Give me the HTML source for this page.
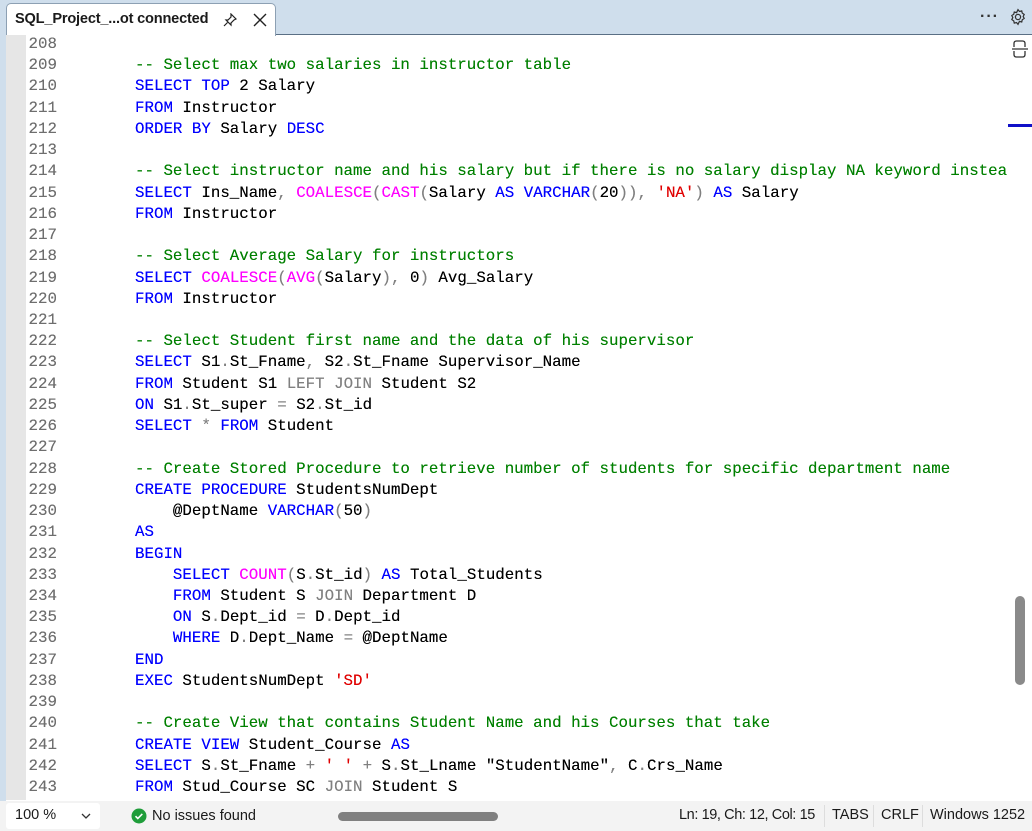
<!DOCTYPE html>
<html><head><meta charset="utf-8"><style>
body{margin:0;width:1032px;height:831px;overflow:hidden;background:#fff;font-family:"Liberation Sans",sans-serif;position:relative}
.tabbar{position:absolute;left:0;top:0;width:1032px;height:34px;background:#cfdeec;border-bottom:1px solid #5a6f85}
.tab{position:absolute;left:6px;top:3px;width:268px;height:32px;background:#fff;border:1px solid #8da0b3;border-bottom:none;border-radius:5px 5px 0 0}
.tab .t{position:absolute;left:8px;top:7px;font-size:14.6px;font-weight:bold;color:#1a1a1a;letter-spacing:-0.2px}
.lb{position:absolute;left:0;top:34px;width:6px;height:797px;background:#cfdeec}
.gut{position:absolute;left:6px;top:35px;width:20px;height:765px;background:#e6e6e6}
.code{position:absolute;left:0;top:34px;font-family:"Liberation Mono",monospace;font-size:15.8px;line-height:21.23px;white-space:pre;color:#000;text-shadow:0 0 0.3px currentColor}
.ln{position:absolute;left:27px;width:30px;text-align:right;color:#6e6e6e}
.c{position:absolute;left:135px}
.k{color:#0000ff}.f{color:#ff00ff}.g{color:#008000}.s{color:#e00000}.p{color:#808080}
.status{position:absolute;left:0;top:801px;width:1032px;height:30px;background:#f3f3f3;font-size:14.5px;color:#1a1a1a}
</style></head><body>
<div class="tabbar"><div class="tab"><span class="t">SQL_Project_...ot connected</span>
<svg style="position:absolute;left:216px;top:9px" width="14" height="14" viewBox="0 0 14 14" fill="none" stroke="#222" stroke-width="1.2"><path d="M8 1l5 5-2 1-3 3v2L3 7h2l3-3z M4.5 9.5L1 13"/></svg>
<svg style="position:absolute;left:246px;top:9px" width="14" height="14" viewBox="0 0 14 14" stroke="#222" stroke-width="1.4"><path d="M1 1L13 13M13 1L1 13"/></svg>
</div>
<div style="position:absolute;left:980px;top:8px;font-size:16px;font-weight:bold;color:#333;letter-spacing:1px">···</div>
<svg style="position:absolute;left:1009px;top:8px" width="18" height="18" viewBox="0 0 16 16" fill="none" stroke="#333" stroke-width="1.1"><circle cx="8" cy="8" r="2.3"/><path d="M8 1.5l1.3 1.6 2-.5.5 2 1.7 1.1-.9 1.8.9 1.8-1.7 1.1-.5 2-2-.5L8 14.5l-1.3-1.6-2 .5-.5-2-1.7-1.1.9-1.8-.9-1.8 1.7-1.1.5-2 2 .5z"/></svg>
</div>
<div class="lb"></div><div class="gut"></div>
<svg style="position:absolute;left:1010px;top:39px" width="20" height="20" viewBox="0 0 20 20" fill="none" stroke="#333" stroke-width="1.3"><path d="M4 8V4.5Q4 2 6.5 2h6Q15 2 15 4.5V8M4 12v3.5Q4 18 6.5 18h6q2.5 0 2.5-2.5V12M2 10h16"/></svg>
<div style="position:absolute;left:1008px;top:124px;width:24px;height:3px;background:#1010c8"></div>
<div style="position:absolute;left:1015px;top:596px;width:10px;height:89px;background:#8a8a8a;border-radius:5px"></div>
<div class="code" id="code"></div>
<div class="status">
<div style="position:absolute;left:6px;top:2px;width:94px;height:26px;background:#fff;border-radius:3px"></div>
<span style="position:absolute;left:15px;top:6px">100 %</span>
<svg style="position:absolute;left:80px;top:11px" width="12" height="8" viewBox="0 0 12 8" fill="none" stroke="#333" stroke-width="1.3"><path d="M2 2l4 4 4-4"/></svg>
<svg style="position:absolute;left:131px;top:7px" width="16" height="16" viewBox="0 0 16 16"><circle cx="8" cy="8" r="7.5" fill="#1f9d3a"/><path d="M4.5 8.2l2.3 2.3 4.5-4.6" stroke="#fff" stroke-width="1.6" fill="none"/></svg>
<span style="position:absolute;left:152px;top:7px">No issues found</span>
<div style="position:absolute;left:338px;top:11px;width:160px;height:9px;background:#808080;border-radius:5px"></div>
<span style="position:absolute;left:679px;top:6px;letter-spacing:-0.4px">Ln: 19, Ch: 12, Col: 15</span>
<div style="position:absolute;left:824px;top:4px;width:1px;height:22px;background:#ddd"></div>
<span style="position:absolute;left:832px;top:6px">TABS</span>
<div style="position:absolute;left:873px;top:4px;width:1px;height:22px;background:#ddd"></div>
<span style="position:absolute;left:881px;top:6px">CRLF</span>
<div style="position:absolute;left:922px;top:4px;width:1px;height:22px;background:#ddd"></div>
<span style="position:absolute;left:930px;top:6px">Windows 1252</span>
</div>
<script>
var L=[
'',
'<span class="g">-- Select max two salaries in instructor table</span>',
'<span class="k">SELECT TOP</span> 2 Salary',
'<span class="k">FROM</span> Instructor',
'<span class="k">ORDER BY</span> Salary <span class="k">DESC</span>',
'',
'<span class="g">-- Select instructor name and his salary but if there is no salary display NA keyword instea</span>',
'<span class="k">SELECT</span> Ins_Name<span class="p">,</span> <span class="f">COALESCE</span><span class="p">(</span><span class="f">CAST</span><span class="p">(</span>Salary <span class="k">AS VARCHAR</span><span class="p">(</span>20<span class="p">)),</span> <span class="s">\'NA\'</span><span class="p">)</span> <span class="k">AS</span> Salary',
'<span class="k">FROM</span> Instructor',
'',
'<span class="g">-- Select Average Salary for instructors</span>',
'<span class="k">SELECT</span> <span class="f">COALESCE</span><span class="p">(</span><span class="f">AVG</span><span class="p">(</span>Salary<span class="p">),</span> 0<span class="p">)</span> Avg_Salary',
'<span class="k">FROM</span> Instructor',
'',
'<span class="g">-- Select Student first name and the data of his supervisor</span>',
'<span class="k">SELECT</span> S1<span class="p">.</span>St_Fname<span class="p">,</span> S2<span class="p">.</span>St_Fname Supervisor_Name',
'<span class="k">FROM</span> Student S1 <span class="p">LEFT JOIN</span> Student S2',
'<span class="k">ON</span> S1<span class="p">.</span>St_super <span class="p">=</span> S2<span class="p">.</span>St_id',
'<span class="k">SELECT</span> <span class="p">*</span> <span class="k">FROM</span> Student',
'',
'<span class="g">-- Create Stored Procedure to retrieve number of students for specific department name</span>',
'<span class="k">CREATE PROCEDURE</span> StudentsNumDept',
'    @DeptName <span class="k">VARCHAR</span><span class="p">(</span>50<span class="p">)</span>',
'<span class="k">AS</span>',
'<span class="k">BEGIN</span>',
'    <span class="k">SELECT</span> <span class="f">COUNT</span><span class="p">(</span>S<span class="p">.</span>St_id<span class="p">)</span> <span class="k">AS</span> Total_Students',
'    <span class="k">FROM</span> Student S <span class="p">JOIN</span> Department D',
'    <span class="k">ON</span> S<span class="p">.</span>Dept_id <span class="p">=</span> D<span class="p">.</span>Dept_id',
'    <span class="k">WHERE</span> D<span class="p">.</span>Dept_Name <span class="p">=</span> @DeptName',
'<span class="k">END</span>',
'<span class="k">EXEC</span> StudentsNumDept <span class="s">\'SD\'</span>',
'',
'<span class="g">-- Create View that contains Student Name and his Courses that take</span>',
'<span class="k">CREATE VIEW</span> Student_Course <span class="k">AS</span>',
'<span class="k">SELECT</span> S<span class="p">.</span>St_Fname <span class="p">+</span> <span class="s">\' \'</span> <span class="p">+</span> S<span class="p">.</span>St_Lname "StudentName"<span class="p">,</span> C<span class="p">.</span>Crs_Name',
'<span class="k">FROM</span> Stud_Course SC <span class="p">JOIN</span> Student S'
];
var h='';
for(var i=0;i<L.length;i++){var y=(i*21.23).toFixed(2);h+='<div class="ln" style="top:'+y+'px">'+(208+i)+'</div><div class="c" style="top:'+y+'px">'+L[i]+'</div>';}
document.getElementById('code').innerHTML=h;
</script>
</body></html>
